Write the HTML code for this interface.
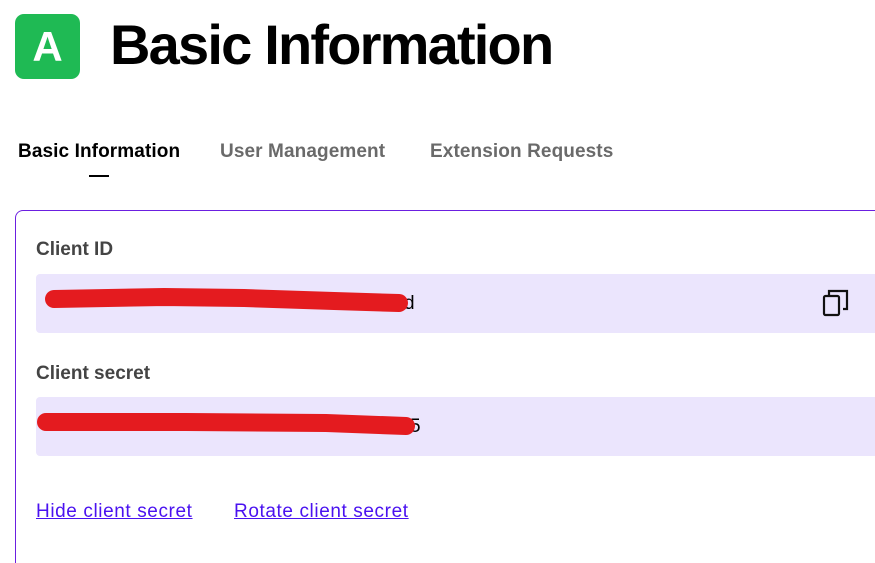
<!DOCTYPE html>
<html style="overflow:hidden;height:563px"><head><meta charset="utf-8"><style>
body{margin:0;width:875px;height:563px;overflow:hidden;background:#fff;font-family:"Liberation Sans",sans-serif;position:relative}
.abs{position:absolute}
.logo{left:15px;top:14px;width:65px;height:65px;background:#1fba54;border-radius:9px;color:#fff;font-weight:bold;font-size:42px;text-align:center;line-height:65px}
h1{position:absolute;left:110px;top:10px;margin:0;font-size:56px;font-weight:bold;letter-spacing:-1.8px;color:#000;line-height:70px}
.tab{top:141px;font-size:19px;font-weight:bold;color:#6a6a6a;letter-spacing:0.1px}
.card{left:15px;top:210px;width:900px;height:353px;border:1px solid #6b1fe0;border-bottom:none;border-radius:8px 8px 0 0;box-sizing:border-box}
.lbl{left:36px;font-size:19px;font-weight:bold;color:#444}
.box{left:36px;width:839px;height:59px;background:#ebe5fd;border-radius:4px 0 0 4px}
.val{font-size:19px;color:#000}
a{position:absolute;top:501px;font-size:19px;color:#4a12f0;text-decoration:underline;letter-spacing:0.6px}
</style></head><body>
<div class="abs logo">A</div>
<h1>Basic Information</h1>
<div class="abs tab" style="left:18px;color:#000">Basic Information</div>
<div class="abs" style="left:89px;top:175px;width:20px;height:2px;background:#000"></div>
<div class="abs tab" style="left:220px">User Management</div>
<div class="abs tab" style="left:430px">Extension Requests</div>
<div class="abs card"></div>
<div class="abs lbl" style="top:239px">Client ID</div>
<div class="abs box" style="top:274px"></div>
<div class="abs val" style="left:404px;top:293px">d</div>
<svg class="abs" style="left:44px;top:288px" width="370" height="28"><path d="M10 11 L120 9 L200 10 L290 13 L355 15" stroke="#e41b1f" stroke-width="18" stroke-linecap="round" fill="none"/></svg>
<svg class="abs" style="left:820px;top:287px" width="36" height="34"><rect x="4" y="9" width="15" height="19" rx="1.5" stroke="#111" stroke-width="2.2" fill="none"/><path d="M9 9 V4 H27 V22 H23" stroke="#111" stroke-width="2.2" fill="none"/></svg>
<div class="abs lbl" style="top:363px">Client secret</div>
<div class="abs box" style="top:397px"></div>
<div class="abs val" style="left:410px;top:416px">5</div>
<svg class="abs" style="left:36px;top:410px" width="385" height="28"><path d="M10 12 L150 12 L290 13 L370 16" stroke="#e41b1f" stroke-width="18" stroke-linecap="round" fill="none"/></svg>
<a style="left:36px">Hide client secret</a>
<a style="left:234px">Rotate client secret</a>
</body></html>
